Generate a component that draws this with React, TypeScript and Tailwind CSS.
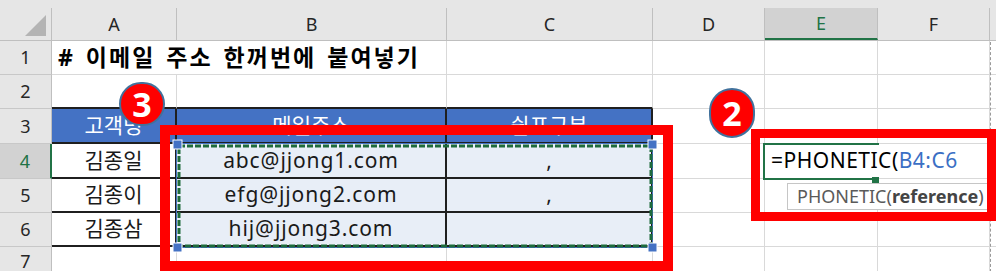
const font = "font-['Noto_Sans','Noto_Sans_CJK_KR',sans-serif]";

const colHeaders = [
  { label: "A", w: "w-[125px]" },
  { label: "B", w: "w-[270px]" },
  { label: "C", w: "w-[206px]" },
  { label: "D", w: "w-[112px]" },
  { label: "E", w: "w-[113px]", active: true },
  { label: "F", w: "w-[112px]" },
];

function RowHead({ n, h, active }: { n: number; h: string; active?: boolean }) {
  return (
    <div
      className={`${h} w-[52px] shrink-0 flex items-center justify-center border-b border-[#c8c8c8] text-[18px] ${
        active
          ? "bg-[#d2d2d2] text-[#217346] border-r-2 border-r-[#217346]"
          : "bg-[#e6e6e6] text-[#262626] border-r border-r-[#bfbfbf]"
      }`}
    >
      {n}
    </div>
  );
}

function Cell({ w, className = "", children }: { w: string; className?: string; children?: React.ReactNode }) {
  return (
    <div className={`${w} shrink-0 flex items-center justify-center border-r border-b border-[#d9d9d9] ${className}`}>
      {children}
    </div>
  );
}

function Blank() {
  return (
    <>
      <Cell w="w-[112px]" />
      <Cell w="w-[113px]" />
      <Cell w="w-[112px]" />
      <div className="flex-1 border-b border-[#d9d9d9]" />
    </>
  );
}

const tb = "border-r-2 border-b-2 border-r-[#1f1f1f] border-b-[#1f1f1f]";

export default function App() {
  const people = [
    { name: "김종일", mail: "abc@jjong1.com", sep: "," },
    { name: "김종이", mail: "efg@jjong2.com", sep: "," },
    { name: "김종삼", mail: "hij@jjong3.com", sep: "" },
  ];

  return (
    <div className={`relative w-[996px] h-[271px] overflow-hidden bg-white text-[#1a1a1a] ${font}`}>
      {/* column headers */}
      <div className="flex h-[41px] bg-[#e6e6e6] border-b border-[#bfbfbf]">
        <div className="w-[52px] shrink-0 mt-[8px] border-r border-[#bfbfbf] relative">
          <svg className="absolute left-[25px] top-[7px]" width="21" height="21" viewBox="0 0 21 21">
            <polygon points="21,0 21,21 0,21" fill="#b4b4b4" />
          </svg>
        </div>
        {colHeaders.map((c) => (
          <div
            key={c.label}
            className={`${c.w} shrink-0 mt-[8px] flex items-center justify-center border-r border-[#bfbfbf] text-[18px] ${
              c.active ? "bg-[#d2d2d2] text-[#217346] border-b-2 border-b-[#217346]" : "text-[#262626]"
            }`}
          >
            {c.label}
          </div>
        ))}
        <div className="flex-1" />
      </div>

      {/* row 1 */}
      <div className="flex h-[34px]">
        <RowHead n={1} h="h-[34px]" />
        <div className="w-[395px] shrink-0 flex items-center pl-[6px] border-r border-b border-[#d9d9d9] text-[23px] font-bold text-black [word-spacing:3px] tracking-[2px] whitespace-nowrap">
          # 이메일 주소 한꺼번에 붙여넣기
        </div>
        <Cell w="w-[206px]" />
        <Blank />
      </div>

      {/* row 2 */}
      <div className="flex h-[34px]">
        <RowHead n={2} h="h-[34px]" />
        <Cell w="w-[125px]" className="border-b-2 border-b-[#1f1f1f]" />
        <Cell w="w-[270px]" className="border-b-2 border-b-[#1f1f1f]" />
        <Cell w="w-[206px]" className="border-b-2 border-b-[#1f1f1f]" />
        <Blank />
      </div>

      {/* row 3 header of table */}
      <div className="flex h-[35px]">
        <RowHead n={3} h="h-[35px]" />
        <Cell w="w-[125px]" className={`bg-[#4472c4] text-white text-[21px] ${tb}`}>고객명</Cell>
        <Cell w="w-[270px]" className={`bg-[#4472c4] text-white text-[21px] ${tb}`}>메일주소</Cell>
        <Cell w="w-[206px]" className={`bg-[#4472c4] text-white text-[21px] ${tb}`}>쉼표구분</Cell>
        <Blank />
      </div>

      {/* rows 4-6 */}
      {people.map((p, i) => (
        <div key={p.name} className={`flex ${i === 0 ? "h-[35px]" : "h-[34px]"}`}>
          <RowHead n={4 + i} h={i === 0 ? "h-[35px]" : "h-[34px]"} active={i === 0} />
          <Cell w="w-[125px]" className={`text-[21px] ${tb}`}>{p.name}</Cell>
          <Cell w="w-[270px]" className={`bg-[#e8eef7] text-[21px] tracking-[0.9px] ${tb}`}>{p.mail}</Cell>
          <Cell w="w-[206px]" className={`bg-[#e8eef7] text-[21px] ${tb}`}>{p.sep}</Cell>
          <Cell w="w-[112px]" />
          {i === 0 ? (
            <div className="w-[225px] shrink-0 flex items-center pl-[6px] bg-white border-b border-[#d9d9d9] text-[21px] tracking-[0.5px] text-black">
              =PHONETIC(<span className="text-[#3b6fc4]">B4:C6</span>
            </div>
          ) : (
            <>
              <Cell w="w-[113px]" />
              <Cell w="w-[112px]" />
            </>
          )}
          <div className="flex-1 border-b border-[#d9d9d9]" />
        </div>
      ))}

      {/* row 7 */}
      <div className="flex h-[30px]">
        <RowHead n={7} h="h-[30px]" />
        <Cell w="w-[125px]" />
        <Cell w="w-[270px]" />
        <Cell w="w-[206px]" />
        <Blank />
      </div>

      {/* page break line */}
      <div className="absolute left-[990px] top-[42px] h-[230px] border-l border-dashed border-[#9a9a9a]" />

      {/* reference range + copy marquee */}
      <svg className="absolute left-[172px] top-[139px]" width="486" height="114" viewBox="0 0 486 114">
        <rect x="4.5" y="4.5" width="476" height="104" fill="none" stroke="#4472c4" strokeWidth="1" />
        <rect x="7" y="7" width="472" height="100" fill="none" stroke="#1e6b3c" strokeWidth="3" strokeDasharray="6 2" />
        {[
          [1, 1],
          [476, 1],
          [1, 104],
          [476, 104],
        ].map(([x, y]) => (
          <rect key={`${x}-${y}`} x={x} y={y} width="9" height="9" fill="#4472c4" stroke="#ffffff" strokeWidth="1" />
        ))}
      </svg>

      {/* active cell E4 */}
      <div className="absolute left-[763px] top-[143px] w-[110px] h-[37px] border-l-2 border-t-2 border-b-2 border-[#217346]" />
      <div className="absolute left-[763px] top-[143px] w-[116px] h-[2px] bg-[#217346]" />
      <div className="absolute left-[872px] top-[177px] w-[7px] h-[6px] bg-[#217346]" />

      {/* function tooltip */}
      <div className="absolute left-[787px] top-[183px] w-[206px] h-[27px] bg-white border border-[#c6c6c6] flex items-center pl-[9px] text-[18px] text-[#5a5a5a] whitespace-nowrap">
        PHONETIC(<span className="font-bold text-[#444]">reference</span>)
      </div>

      {/* red highlight boxes */}
      <div className="absolute left-[160px] top-[125px] w-[513px] h-[146px] border-[10px] border-[#ff0000]" />
      <div className="absolute left-[751px] top-[129px] w-[245px] h-[92px] border-[9px] border-[#ff0000]" />

      {/* step badges */}
      <div className="absolute left-[119px] top-[82px] w-[46px] h-[44px] rounded-full bg-[#ff0000] border-2 border-[#41719c] flex items-center justify-center text-white font-bold text-[34px] leading-none">
        3
      </div>
      <div className="absolute left-[709px] top-[88px] w-[46px] h-[50px] rounded-full bg-[#ff0000] border-2 border-[#41719c] flex items-center justify-center text-white font-bold text-[34px] leading-none">
        2
      </div>
    </div>
  );
}
